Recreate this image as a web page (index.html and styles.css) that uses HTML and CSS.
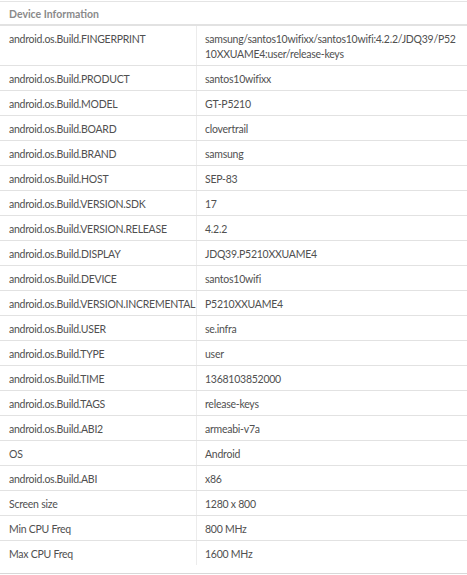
FILE: index.html
```html
<!DOCTYPE html>
<html>
<head>
<meta charset="utf-8">
<link rel="stylesheet" href="styles.css">
</head>
<body>
<div class="panel">
  <div class="panel-head">Device Information</div>
  <table class="info">
    <tbody>
      <tr><td class="key">android.os.Build.FINGERPRINT</td><td class="val wrap">samsung/santos10wifixx/santos10wifi:4.2.2/JDQ39/P5210XXUAME4:user/release-keys</td></tr>
      <tr><td class="key">android.os.Build.PRODUCT</td><td class="val">santos10wifixx</td></tr>
      <tr><td class="key">android.os.Build.MODEL</td><td class="val">GT-P5210</td></tr>
      <tr><td class="key">android.os.Build.BOARD</td><td class="val">clovertrail</td></tr>
      <tr><td class="key">android.os.Build.BRAND</td><td class="val">samsung</td></tr>
      <tr><td class="key">android.os.Build.HOST</td><td class="val">SEP-83</td></tr>
      <tr><td class="key">android.os.Build.VERSION.SDK</td><td class="val">17</td></tr>
      <tr><td class="key">android.os.Build.VERSION.RELEASE</td><td class="val">4.2.2</td></tr>
      <tr><td class="key">android.os.Build.DISPLAY</td><td class="val">JDQ39.P5210XXUAME4</td></tr>
      <tr><td class="key">android.os.Build.DEVICE</td><td class="val">santos10wifi</td></tr>
      <tr><td class="key">android.os.Build.VERSION.INCREMENTAL</td><td class="val">P5210XXUAME4</td></tr>
      <tr><td class="key">android.os.Build.USER</td><td class="val">se.infra</td></tr>
      <tr><td class="key">android.os.Build.TYPE</td><td class="val">user</td></tr>
      <tr><td class="key">android.os.Build.TIME</td><td class="val">1368103852000</td></tr>
      <tr><td class="key">android.os.Build.TAGS</td><td class="val">release-keys</td></tr>
      <tr><td class="key">android.os.Build.ABI2</td><td class="val">armeabi-v7a</td></tr>
      <tr><td class="key">OS</td><td class="val">Android</td></tr>
      <tr><td class="key">android.os.Build.ABI</td><td class="val">x86</td></tr>
      <tr><td class="key">Screen size</td><td class="val">1280 x 800</td></tr>
      <tr><td class="key">Min CPU Freq</td><td class="val">800 MHz</td></tr>
      <tr><td class="key">Max CPU Freq</td><td class="val">1600 MHz</td></tr>
    </tbody>
  </table>
</div>
</body>
</html>
```
FILE: styles.css
```css
html, body {
  margin: 0;
  padding: 0;
  background: #fff;
}
body {
  padding-top: 1px;
  font-family: Lato, "Open Sans", sans-serif;
  font-size: 10.5px;
  letter-spacing: -0.25px;
  color: #505050;
}
.panel {
  border-top: 1px solid #e4e4e4;
  border-bottom: 1px solid #d8d8d8;
  padding-bottom: 8px;
}
.panel-head {
  height: 22px;
  line-height: 24px;
  padding: 0 9px;
  font-weight: bold;
  letter-spacing: 0;
  color: #8a8a8a;
  border-bottom: 2px solid #e2e2e2;
}
.info {
  width: 100%;
  border-collapse: collapse;
  table-layout: fixed;
}
.info td {
  padding: 6px 8px 3px 9px;
  line-height: 15px;
  border-bottom: 1px solid #e2e2e2;
  vertical-align: top;
}
.info tr:last-child td {
  border-bottom: none;
}
.info .key {
  width: 179px;
  border-right: 1px solid #ececec;
}
.info .val {
  padding-left: 8px;
}
.info .wrap {
  word-break: break-all;
}
```
